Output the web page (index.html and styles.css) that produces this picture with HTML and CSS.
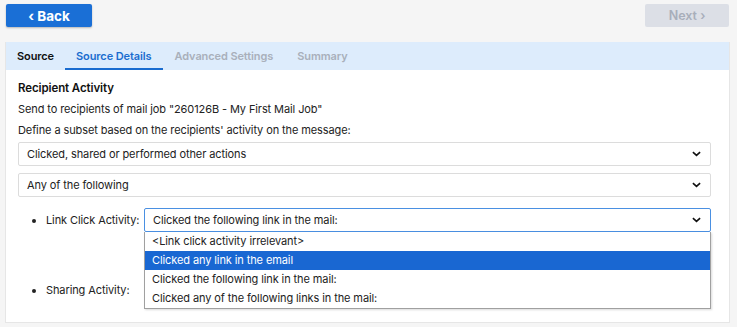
FILE: index.html
```html
<!DOCTYPE html>
<html lang="en">
<head>
  <meta charset="UTF-8" />
  <title>Recipient Activity</title>
  <link rel="stylesheet" href="styles.css">
</head>
<body>
  <div class="topbar">
    <button class="btn btn-back">&#8249; Back</button>
    <button class="btn btn-next" disabled>Next &#8250;</button>
  </div>

  <div class="panel">
    <div class="tabs">
      <div class="tab done">Source</div>
      <div class="tab active">Source Details</div>
      <div class="tab off">Advanced Settings</div>
      <div class="tab off">Summary</div>
    </div>

    <div class="panel-body">
      <h3 class="section-title">Recipient Activity</h3>
      <p class="line send">Send to recipients of mail job "260126B - My First Mail Job"</p>
      <p class="line">Define a subset based on the recipients' activity on the message:</p>

      <div class="select first">
        <span>Clicked, shared or performed other actions</span>
        <svg class="chev" viewBox="0 0 10 6" width="9" height="6"><path d="M1 1l4 3.6L9 1" fill="none" stroke="#111" stroke-width="1.8"/></svg>
      </div>
      <div class="select">
        <span>Any of the following</span>
        <svg class="chev" viewBox="0 0 10 6" width="9" height="6"><path d="M1 1l4 3.6L9 1" fill="none" stroke="#111" stroke-width="1.8"/></svg>
      </div>

      <ul class="activity">
        <li>
          <div class="row">
            <span class="label">Link Click Activity:</span>
            <div class="select-wrap">
              <div class="select focus">
                <span>Clicked the following link in the mail:</span>
                <svg class="chev" viewBox="0 0 10 6" width="9" height="6"><path d="M1 1l4 3.6L9 1" fill="none" stroke="#111" stroke-width="1.8"/></svg>
              </div>
              <!-- opened list -->
              <div class="dropdown">
                <div class="opt">&lt;Link click activity irrelevant&gt;</div>
                <div class="opt hl">Clicked any link in the email</div>
                <div class="opt">Clicked the following link in the mail:</div>
                <div class="opt">Clicked any of the following links in the mail:</div>
              </div>
            </div>
          </div>
        </li>
        <li class="row-share">
          <div class="row">
            <span class="label">Sharing Activity:</span>
          </div>
        </li>
      </ul>
    </div>
  </div>
</body>
</html>
```

FILE: styles.css
```css
body {
  margin: 0;
  background: #f5f5f5;
  font-family: 'Inter', 'Open Sans', sans-serif;
  font-size: 11px;
  letter-spacing: -0.1px;
  color: #222;
}
/* --- top buttons --- */
.topbar {
  display: flex;
  justify-content: space-between;
  padding: 4px 8px 0 6px;
}
.btn {
  width: 86px;
  height: 23px;
  border: none;
  border-radius: 2px;
  font-family: inherit;
  font-size: 13.5px;
  font-weight: 700;
  padding: 0;
}
.btn-back {
  background: #1a6fd6;
  color: #fff;
  box-shadow: 0 1px 2px rgba(0,0,0,0.25);
}
.btn-next {
  width: 84px;
  background: #dcdfe6;
  color: #a8aeba;
  font-weight: 600;
  font-size: 12.5px;
}
/* --- panel --- */
.panel {
  margin: 15px 7px 0 5px;
  background: #fff;
  border: 1px solid #e6e6e6;
  border-top: none;
  height: 280px;
}
.tabs {
  display: flex;
  background: #ddecfc;
  height: 28px;
}
.tab {
  font-weight: 600;
  font-size: 11px;
  line-height: 28px;
  padding: 0 12px;
  box-sizing: border-box;
}
.tab.done { color: #111; padding: 0 11px; }
.tab.off { color: #a9b0bb; padding: 0 12px; }
.tab.active {
  color: #1a6ccf;
  border-bottom: 2px solid #1a6ccf;
  padding: 0 11px;
}
.panel-body {
  padding: 10px 18px 0 12px;
}
.section-title {
  margin: 0 0 5px;
  font-size: 11.5px;
  line-height: 16px;
  font-weight: 600;
  color: #111;
}
.line {
  margin: 0 0 4px;
  line-height: 16px;
}
.line.send { margin-bottom: 5px; }
/* --- fake selects --- */
.select {
  display: flex;
  align-items: center;
  justify-content: space-between;
  height: 24px;
  box-sizing: border-box;
  border: 1px solid #dcdcdc;
  border-radius: 2px;
  padding: 0 9px 0 8px;
  background: #fff;
  margin-top: 7px;
}
.select.first { margin-top: 0; }
.select.focus {
  margin-top: 0;
  border-color: #4a90e2;
}
.activity {
  margin: 11px 0 0;
  padding: 0 0 0 28px;
}
.row {
  display: flex;
  align-items: center;
}
.label {
  width: 98px;
  flex-shrink: 0;
  white-space: nowrap;
}
.select-wrap {
  flex: 1;
  position: relative;
}
.dropdown {
  position: absolute;
  top: 100%;
  left: 0;
  right: 0;
  background: #fff;
  border: 1px solid #a0a0a0;
  border-top: none;
  box-shadow: 1px 1px 2px rgba(0,0,0,0.15);
  z-index: 10;
}
.opt {
  height: 19px;
  line-height: 19px;
  padding-left: 7px;
}
.opt.hl {
  background: #1967d2;
  color: #fff;
}
.row-share {
  margin-top: 51px;
}
```
